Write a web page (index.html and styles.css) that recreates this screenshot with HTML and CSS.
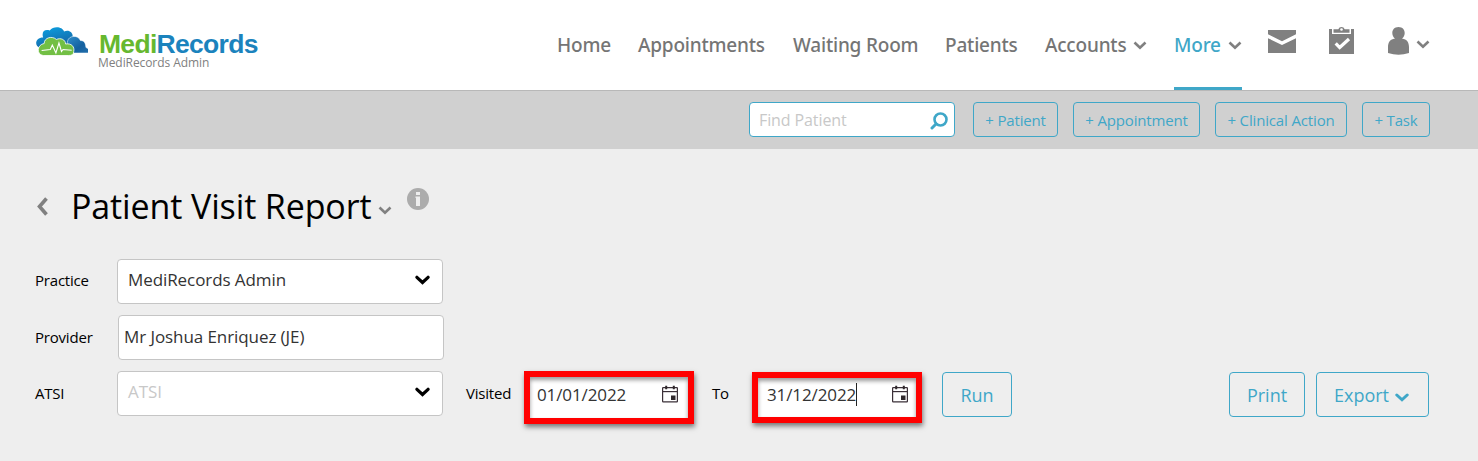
FILE: index.html
```html
<!DOCTYPE html>
<html lang="en">
<head>
<meta charset="utf-8">
<title>Patient Visit Report</title>
<link rel="stylesheet" href="styles.css">
</head>
<body>
<svg width="0" height="0" class="defs">
  <symbol id="chev" viewBox="0 0 14 9"><path d="M1.500 1.500 7 6.800l5.500-5.300" fill="none" stroke="currentColor" stroke-width="2.600"/></symbol>
  <symbol id="chev-round" viewBox="0 0 14 9"><path d="M1.800 2 7 6.800 12.200 2" fill="none" stroke="currentColor" stroke-width="3" stroke-linecap="round"/></symbol>
  <symbol id="cal" viewBox="0 0 16 18"><rect x=".6" y="2.600" width="14.800" height="14.300" rx=".6" fill="none" stroke="#3b3038" stroke-width="1.200"/><path d="M.6 6.600h14.800" stroke="#3b3038" stroke-width="1.200"/><path d="M3.200.8h2v3.400h-2zM10.800.8h2v3.400h-2zM9 10.500h4.500V15H9z" fill="#2f282c"/></symbol>
</svg>
<header class="top">
  <div class="brand">
    <svg class="cloud" viewBox="0 0 52 29" preserveAspectRatio="none">
      <defs>
        <linearGradient id="blue" x1="0" y1="0" x2="0.400" y2="1"><stop offset="0" stop-color="#0aa5e6"/><stop offset="1" stop-color="#1760a0"/></linearGradient>
        <linearGradient id="navy" x1="0" y1="0" x2="1" y2="1"><stop offset="0" stop-color="#2d8ecb"/><stop offset=".6" stop-color="#14609f"/><stop offset="1" stop-color="#2370ad"/></linearGradient>
      </defs>
      <path d="M5 21C-1 19 0 10.500 8 10.500 6 4 10 2 14.500 3.500 18-1.500 27-.5 28.500 4.500 33 2.500 37 5 37 9.500l-1 14z" fill="url(#blue)"/>
      <path d="M32 14c1-5.500 10.500-6.500 12.500-.5 5 0 5 4.500 5.500 7 2.500 1 3.500 2.500 3 5.500H35c-2-4-4-8-3-12z" fill="url(#navy)" stroke="#fff" stroke-width=".5"/>
      <path d="M8 28.500C1 27.500 2 17.500 9 16.500c0-6 8-8 12-4 4-2 9 0 9 4.500 6-1 9 3 8 7.500 0 3-2 4-5 4z" fill="#72bf44" stroke="#fff" stroke-width=".8"/>
      <path d="M6.500 23.500 15 22.500l2-4.500 3.500 8 3-10 2.500 8.500 1.500-2 8.500.8" fill="none" stroke="#fff" stroke-width="1.100"/>
    </svg>
    <div class="names">
      <div class="wordmark"><span class="medi">Medi</span><span class="rec">Records</span></div>
      <div class="tenant">MediRecords Admin</div>
    </div>
  </div>
  <nav class="nav">
    <a class="w-home">Home</a>
    <a class="w-appt">Appointments</a>
    <a class="w-wait">Waiting Room</a>
    <a class="w-pat">Patients</a>
    <a class="w-acc">Accounts<svg class="chev"><use href="#chev"/></svg></a>
    <a class="w-more active">More<svg class="chev"><use href="#chev"/></svg></a>
    <svg class="mail" viewBox="0 0 28 23"><path d="M0 0h28v4.300L14 11.200 0 4.300zM0 8.200l14 6.700 14-6.700V23H0z" fill="#808080"/></svg>
    <svg class="clip" viewBox="0 0 25 28"><path d="M0 3h3v5h19V3h3v25H0z" fill="#808080"/><path d="M4.500 3.300h4.800a3.400 3.400 0 0 1 6.400 0h4.800v3.400h-16z" fill="#808080"/><circle cx="12.500" cy="3.500" r="1.300" fill="#fff"/><path d="M6.700 17.300l4 4.200L20 13" fill="none" stroke="#fff" stroke-width="3.200"/></svg>
    <svg class="user" viewBox="0 0 21 28"><path d="M7 11.500C2.500 8 3.600 0 10.500 0S18.500 8 14 11.500c5 .8 7 4 7 8.500v6q-10.500 3.600-21 0v-6c0-4.500 2-7.700 7-8.500z" fill="#808080"/></svg>
    <svg class="chev"><use href="#chev"/></svg>
  </nav>
</header>
<div class="tools">
  <div class="search"><span>Find Patient</span>
    <svg class="glass" viewBox="0 0 18 18"><circle cx="10.500" cy="7.500" r="6" fill="none" stroke="#3fa7c8" stroke-width="2.600"/><path d="M6 12l-4 4" stroke="#3fa7c8" stroke-width="3" stroke-linecap="round"/></svg>
  </div>
  <a class="quick q1">+ Patient</a>
  <a class="quick q2">+ Appointment</a>
  <a class="quick q3">+ Clinical Action</a>
  <a class="quick q4">+ Task</a>
</div>
<main>
  <div class="title">
    <svg class="back" viewBox="0 0 11 19"><path d="M9.500 1.500 2.500 9.500l7 8" fill="none" stroke="#808080" stroke-width="3.600"/></svg>
    <h1>Patient Visit Report</h1>
    <svg class="chev tchev"><use href="#chev"/></svg>
    <svg class="info" viewBox="0 0 22 22"><circle cx="11" cy="11" r="11" fill="#acacac"/><path d="M9 4h4v3H9zM8.500 8.500H13V18H9v-8h-.5z" fill="#eee"/></svg>
  </div>
  <div class="row"><label>Practice</label><div class="field select">MediRecords Admin<svg class="fchev"><use href="#chev-round"/></svg></div></div>
  <div class="row"><label class="low">Provider</label><div class="field provider">Mr Joshua Enriquez (JE)</div></div>
  <div class="row">
    <label class="low">ATSI</label><div class="field select empty"><span class="ph">ATSI</span><svg class="fchev"><use href="#chev-round"/></svg></div>
    <span class="lbl low visited">Visited</span>
    <div class="date from"><span>01/01/2022</span><svg class="cal"><use href="#cal"/></svg></div>
    <span class="lbl low to">To</span>
    <div class="date until"><span>31/12/2022</span><i class="caret"></i><svg class="cal"><use href="#cal"/></svg></div>
    <a class="btn run">Run</a>
    <a class="btn print">Print</a>
    <a class="btn export">Export<svg class="echev"><use href="#chev-round"/></svg></a>
  </div>
</main>
</body>
</html>
```
FILE: styles.css
```css
* { box-sizing: border-box; }
body { margin: 0; width: 1478px; height: 461px; overflow: hidden; background: #eee; font-family: "Open Sans", "Noto Sans", sans-serif; color: #000; }
.defs { display: block; height: 0; }
svg { flex: none; display: block; }
.top { height: 91px; background: #fff; border-bottom: 1px solid #b8b8b8; display: flex; justify-content: space-between; }
.brand { display: flex; padding: 27px 0 0 35px; }
.cloud { width: 53px; height: 29px; }
.names { padding: 5px 0 0 10px; white-space: nowrap; }
.wordmark { font: bold 26.500px/24px "Liberation Sans", sans-serif; letter-spacing: -0.700px; padding-left: 1px; }
.medi { color: #66b82f; }
.rec { color: #1b83bd; }
.tenant { font-size: 12px; line-height: 14px; color: #808080; letter-spacing: -0.080px; }
.nav { display: flex; height: 90px; padding-right: 48px; color: #757575; font: 500 19px/90px "Noto Sans", sans-serif; letter-spacing: -0.200px; white-space: nowrap; }
.nav a { display: flex; justify-content: space-between; height: 90px; }
.chev { width: 14px; height: 9px; color: #808080; margin-top: 41px; }
.w-home { width: 54px; margin-right: 27px; }
.w-appt { width: 128px; margin-right: 27px; }
.w-wait { width: 125px; margin-right: 27px; }
.w-pat { width: 74px; margin-right: 26px; }
.w-acc { width: 102px; margin-right: 27px; }
.w-more { width: 68px; margin-right: 26px; }
.active { color: #3fa7c8; border-bottom: 3px solid #3fa7c8; }
.mail { width: 28px; height: 23px; margin: 30px 33px 0 0; }
.clip { width: 25px; height: 28px; margin: 26px 34px 0 0; }
.user { width: 21px; height: 28px; margin: 27px 7px 0 0; }
.nav > .chev { margin-top: 40px; }
.tools { height: 58px; background: #d0d0d0; display: flex; justify-content: flex-end; padding: 11px 48px 0 0; }
.search { width: 206px; height: 35px; background: #fff; border: 1px solid #3fa7c8; border-radius: 4px; margin-right: 18px; padding: 0 6px 0 9px; display: flex; align-items: center; justify-content: space-between; color: #c8c8c8; font-size: 16px; letter-spacing: -0.100px; }
.glass { width: 18px; height: 18px; margin-top: 2px; }
.quick { height: 35px; border: 1px solid #3fa7c8; border-radius: 4px; color: #3fa7c8; font-size: 15px; line-height: 35px; letter-spacing: -0.150px; text-align: center; margin-right: 15px; white-space: nowrap; }
.q1 { width: 85px; }
.q2 { width: 127px; }
.q3 { width: 132px; }
.q4 { width: 68px; margin-right: 0; }
main { padding: 0 49px 0 35px; }
.title { display: flex; height: 110px; }
.back { width: 11px; height: 19px; margin: 48px 0 0 2px; }
h1 { margin: 33px 0 0 23px; font-size: 34px; line-height: 48px; font-weight: 400; letter-spacing: -0.120px; width: 307px; white-space: nowrap; }
.tchev { margin-top: 57px; }
.info { width: 22px; height: 22px; margin: 39px 0 0 15px; }
.row { display: flex; height: 56px; }
label, .lbl { font-size: 15px; line-height: 43px; letter-spacing: -0.200px; }
label { width: 82px; }
.low { line-height: 45px; }
.field { width: 326px; height: 45px; background: #fff; border: 1px solid #c5c5c5; border-radius: 4px; padding: 0 12px 0 10px; font-size: 17px; line-height: 40px; letter-spacing: -0.080px; color: #333; display: flex; justify-content: space-between; }
.provider { margin-left: 1px; padding-left: 5px; line-height: 42px; }
.ph { color: #c8c8c8; }
.fchev { width: 15px; height: 10px; color: #000; margin-top: 15px; }
.visited { width: 58px; margin-left: 23px; }
.date { width: 170px; height: 53px; border: 6px solid #f00; background: #fff; display: flex; justify-content: space-between; font-size: 17px; line-height: 36px; letter-spacing: -0.100px; color: #333; box-shadow: 1px 3px 5px rgba(0,0,0,.5), inset 0 3px 4px rgba(0,0,0,.4); padding: 0 10px 0 7px; }
.cal { width: 16px; height: 18px; margin-top: 8px; }
.to { width: 40px; margin-left: 18px; }
.until { height: 51px; margin-top: 1px; line-height: 34px; padding: 0 8px 0 9px; }
.until .cal { margin-left: auto; margin-top: 7px; }
.caret { width: 1px; height: 23px; background: #222; margin-top: 5px; }
.btn { height: 45px; margin-top: 1px; border: 1px solid #3fa7c8; border-radius: 4px; color: #3fa7c8; font-size: 18px; line-height: 45px; text-align: center; }
.run { width: 70px; margin-left: 20px; }
.print { width: 76px; margin-left: auto; }
.export { width: 113px; margin-left: 11px; display: flex; padding: 0 19px 0 17px; justify-content: space-between; }
.echev { width: 14px; height: 9px; margin-top: 20px; }
```
